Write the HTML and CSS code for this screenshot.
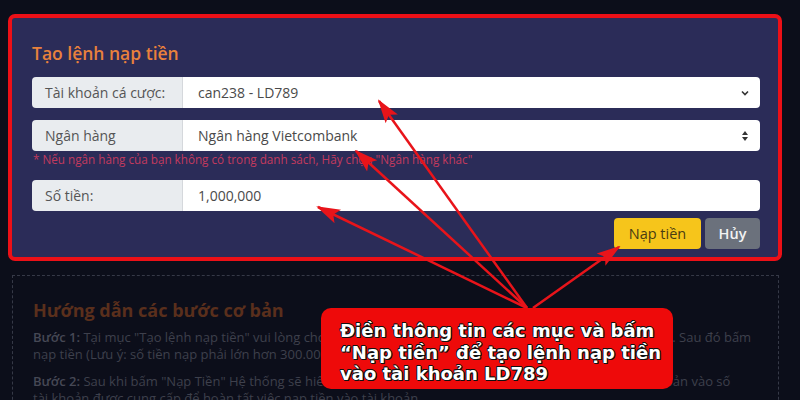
FILE: index.html
```html
<!DOCTYPE html>
<html lang="vi">
<head>
  <meta charset="UTF-8">
  <title>Nạp tiền</title>
  <link rel="stylesheet" href="styles.css">
</head>
<body>

<div class="page">
  <section class="deposit">
    <h2 class="deposit-title">Tạo lệnh nạp tiền</h2>

    <div class="field">
      <span class="field-label">Tài khoản cá cược:</span>
      <div class="field-value">
        can238 - LD789
        <svg class="field-icon" width="10" height="8" viewBox="0 0 10 8"><path d="M2 2.5 L5 5.5 L8 2.5" fill="none" stroke="#333" stroke-width="1.6"/></svg>
      </div>
    </div>

    <div class="field">
      <span class="field-label">Ngân hàng</span>
      <div class="field-value">
        Ngân hàng Vietcombank
        <svg class="field-icon" width="10" height="12" viewBox="0 0 10 12"><path d="M5 1 L8 5 H2 Z M5 11 L8 7 H2 Z" fill="#333"/></svg>
      </div>
    </div>
    <p class="hint">* Nếu ngân hàng của bạn không có trong danh sách, Hãy chọn "Ngân hàng khác"</p>

    <div class="field">
      <span class="field-label">Số tiền:</span>
      <div class="field-value">1,000,000</div>
    </div>

    <div class="actions">
      <button class="btn btn-submit">Nạp tiền</button>
      <button class="btn btn-cancel">Hủy</button>
    </div>
  </section>

  <section class="guide">
    <h2 class="guide-title">Hướng dẫn các bước cơ bản</h2>
    <p><b>Bước 1:</b> Tại mục "Tạo lệnh nạp tiền" vui lòng chọn tài khoản, ngân hàng rồi nhập đầy đủ số tiền muốn nạp. Sau đó bấm nạp tiền (Lưu ý: số tiền nạp phải lớn hơn 300.000 VNĐ)</p>
    <p><b>Bước 2:</b> Sau khi bấm "Nạp Tiền" Hệ thống sẽ hiển thị ra thông tin tài khoản nhận tiền, vui lòng chuyển khoản vào số<br>tài khoản được cung cấp để hoàn tất việc nạp tiền vào tài khoản.</p>
  </section>
</div>

<!-- mũi tên chỉ vào từng ô nhập -->
<svg class="arrows" width="800" height="400" viewBox="0 0 800 400">
  <defs>
    <marker id="head" markerUnits="userSpaceOnUse" markerWidth="24" markerHeight="18" refX="22" refY="9" orient="auto">
      <path d="M0 1.5 L24 9 L0 16.5 L5 9 Z" fill="#e8141a"/>
    </marker>
  </defs>
  <g stroke="#e8141a" stroke-width="2.5" fill="none">
    <line x1="527" y1="308" x2="379" y2="101" marker-end="url(#head)"/>
    <line x1="527" y1="308" x2="356" y2="151" marker-end="url(#head)"/>
    <line x1="527" y1="308" x2="318" y2="207" marker-end="url(#head)"/>
    <line x1="533" y1="308" x2="619" y2="247" marker-end="url(#head)"/>
  </g>
</svg>

<div class="callout">
  Điền thông tin các mục và bấm<br>
  “Nạp tiền” để tạo lệnh nạp tiền<br>
  vào tài khoản LD789
</div>

</body>
</html>
```

FILE: styles.css
```css
* { box-sizing: border-box; }
body {
  margin: 0;
  background: #0c0e1a;
  font-family: 'Open Sans', sans-serif;
  width: 800px;
  height: 400px;
  overflow: hidden;
  position: relative;
}
.page {
  padding: 14px 18px 0 8px;
}
.deposit {
  background: #2b2c58;
  border: 4px solid #ec1017;
  border-radius: 7px;
  padding: 24px 18px 8px 20px;
}
.deposit-title {
  margin: 0 0 13px;
  font-size: 17.5px;
  line-height: 22px;
  font-weight: 600;
  color: #e9813c;
}
.field {
  display: flex;
  height: 31px;
  border-radius: 4px;
  overflow: hidden;
  margin-bottom: 12px;
  font-size: 14px;
}
.field-label {
  width: 151px;
  background: #e9ecef;
  color: #555;
  padding: 0 12px 0 13px;
  display: flex;
  align-items: center;
  border-right: 1px solid #d5d8dc;
}
.field-value {
  flex: 1;
  background: #fff;
  color: #4a4a4a;
  padding: 0 10px 0 15px;
  display: flex;
  align-items: center;
  justify-content: space-between;
}
.hint {
  margin: -11px 0 14px 1px;
  font-size: 11.7px;
  line-height: 14px;
  color: #c23a5e;
}
.actions {
  display: flex;
  justify-content: flex-end;
  gap: 4px;
  margin-top: -5px;
}
.btn {
  height: 31px;
  border: none;
  border-radius: 4px;
  font-family: 'Open Sans', sans-serif;
  font-size: 14.5px;
  cursor: pointer;
}
.btn-submit {
  width: 87px;
  background: #f6c51b;
  color: #4a3c12;
}
.btn-cancel {
  width: 55px;
  background: #6b717c;
  color: #f2f2f2;
  font-weight: 600;
}
.guide {
  margin: 14px 3px 0 4px;
  border: 1px dashed #363947;
  border-bottom: none;
  padding: 23px 20px 0 20px;
  height: 140px;
  color: #3e404c;
  font-size: 13px;
  line-height: 17px;
}
.guide-title {
  margin: 0 0 8px;
  font-size: 18px;
  line-height: 22px;
  font-weight: 700;
  color: #5a2f1c;
}
.guide p { margin: 0 0 10px; }
.guide b { font-weight: 600; color: #464855; }
.arrows {
  position: absolute;
  left: 0;
  top: 0;
  pointer-events: none;
}
.callout {
  position: absolute;
  left: 321px;
  top: 308px;
  width: 352px;
  height: 81px;
  background: #ee0a0a;
  border-radius: 10px;
  padding: 12px 0 0 19px;
  font-family: 'DejaVu Sans', sans-serif;
  font-weight: bold;
  font-size: 18px;
  line-height: 21.5px;
  color: #fff;
  text-shadow: 1px 0 0 #111, -1px 0 0 #111, 0 1px 0 #111, 0 -1px 0 #111, 1px 1px 0 #111, -1px -1px 0 #111;
}
```
